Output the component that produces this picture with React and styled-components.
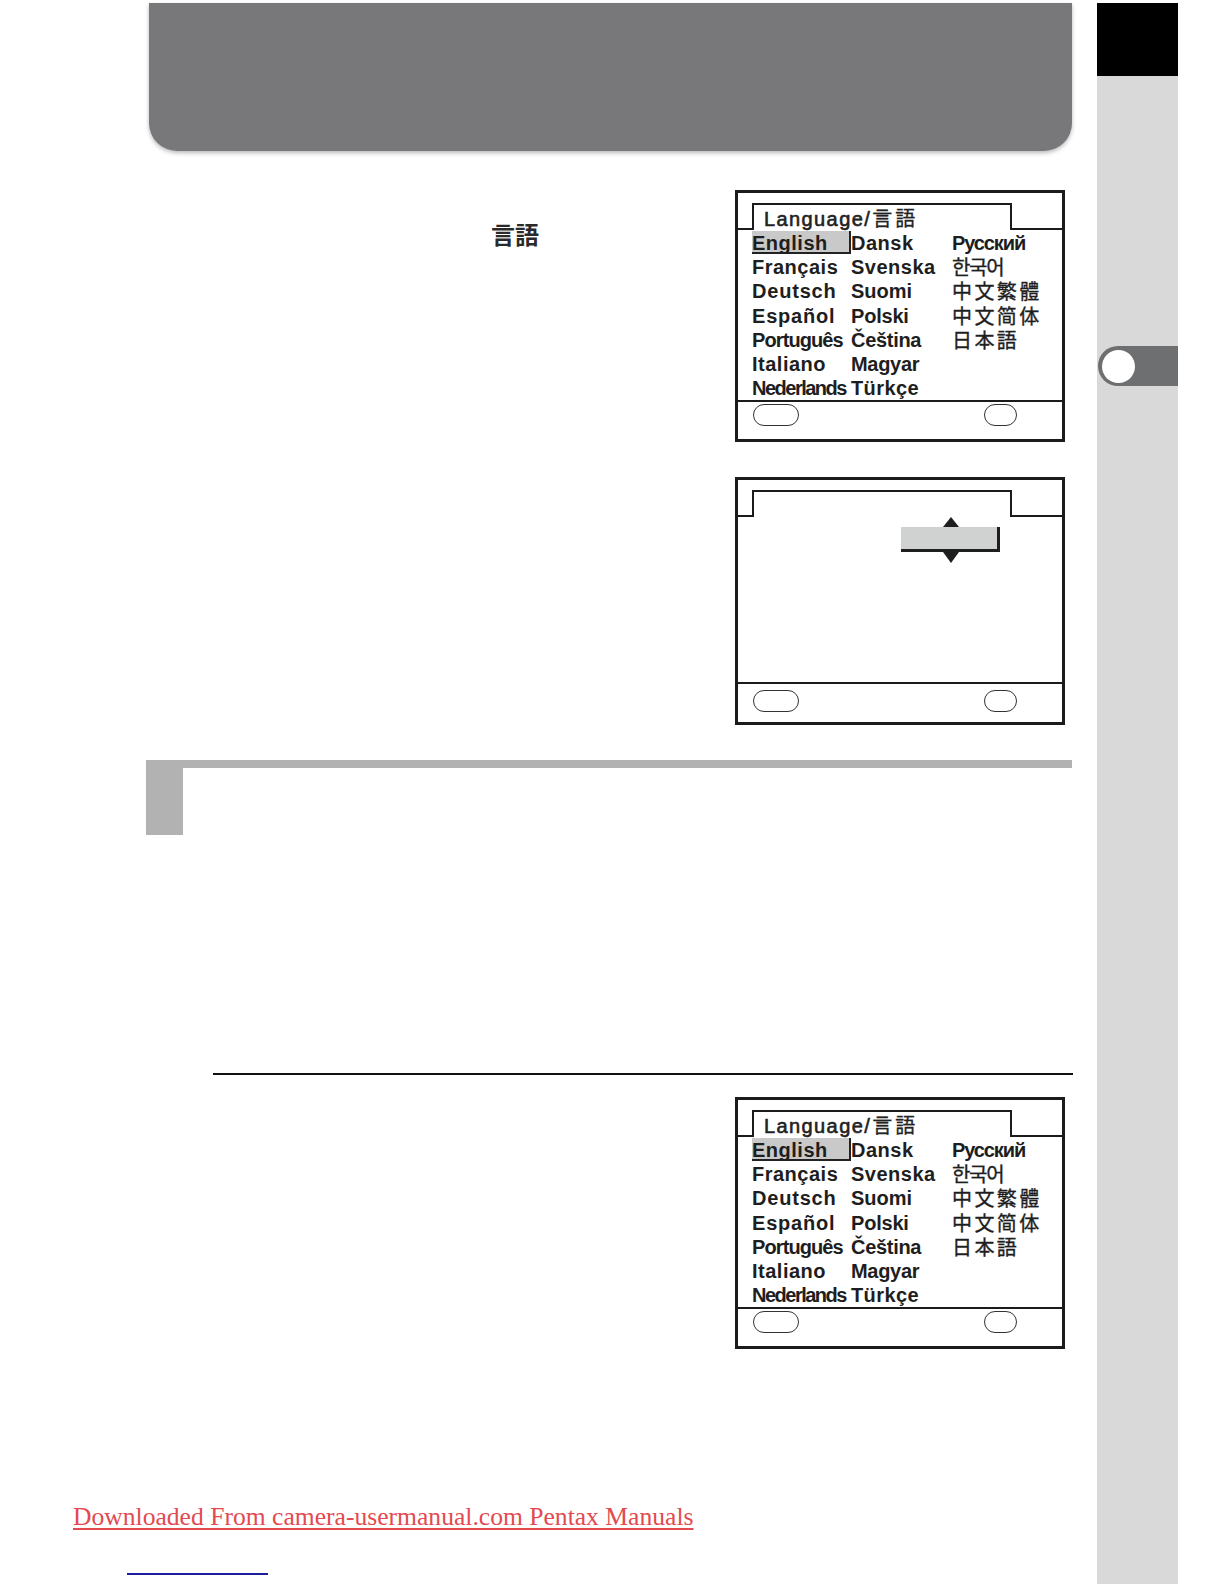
import React from "react";
import styled, { createGlobalStyle } from "styled-components";

const GlobalStyle = createGlobalStyle`
  html, body {
    margin: 0;
    padding: 0;
    background: #fff;
  }
  body {
    font-family: "Liberation Sans", Arial, sans-serif;
    color: #1e1e1e;
  }
`;

const Page = styled.div`
  display: grid;
  grid-template-columns: 1097px 81px 1fr;
  min-height: 1584px;
  box-sizing: border-box;
  padding-top: 3px;
`;

const Main = styled.div`
  display: flex;
  flex-direction: column;
`;

const Banner = styled.div`
  margin-left: 149px;
  width: 923px;
  height: 148px;
  background: #78787a;
  border-radius: 0 0 28px 28px;
  box-shadow: 0 2px 4px rgba(0, 0, 0, 0.28);
`;

const Intro = styled.div`
  display: flex;
  justify-content: space-between;
  margin-top: 39px;
  padding: 0 32px 0 146px;
`;

const TextCol = styled.div`
  padding: 32px 0 0 345px;
`;

const Term = styled.span`
  font-family: "Noto Sans CJK JP", "Noto Sans CJK SC", sans-serif;
  font-weight: 700;
  font-size: 24px;
  line-height: 24px;
  color: #2a2a2a;
`;

const ScreenCol = styled.div`
  display: flex;
  flex-direction: column;
  gap: 35px;
`;

const Screen = styled.div`
  width: 330px;
  height: ${(p) => p.$h}px;
  box-sizing: border-box;
  border: 3px solid #1b1b1b;
  display: flex;
  flex-direction: column;
  background: #fff;
`;

const TabRow = styled.div`
  height: 37px;
  flex: none;
  box-sizing: border-box;
  padding: 10px 0 0 14px;
  border-bottom: 2px solid #1b1b1b;
  display: flex;
  align-items: flex-end;
`;

const Tab = styled.div`
  width: 260px;
  height: 27px;
  box-sizing: border-box;
  border: 2px solid #1b1b1b;
  border-bottom: none;
  margin-bottom: -2px;
  background: #fff;
  padding-left: 10px;
  display: flex;
  align-items: center;
`;

const TabTitle = styled.span`
  font-size: 20px;
  letter-spacing: 1.4px;
  color: #222;
  -webkit-text-stroke: 0.6px #222;
  white-space: nowrap;
`;

const TitleCjk = styled.span`
  font-family: "Noto Sans CJK JP", sans-serif;
  font-size: 20px;
  letter-spacing: 3px;
  margin-left: 1px;
  -webkit-text-stroke: 0.3px #222;
`;

const Body = styled.div`
  height: ${(p) => p.$h}px;
  flex: none;
`;

const List = styled.div`
  display: grid;
  grid-template-columns: 99px 101px 1fr;
  grid-auto-rows: 24.2px;
  padding: 1px 0 0 14px;
`;

const Cell = styled.div`
  font-family: ${(p) =>
    p.$cjk
      ? '"Noto Sans CJK JP", "Noto Sans CJK KR", sans-serif'
      : '"Liberation Sans", Arial, sans-serif'};
  font-weight: ${(p) => (p.$cjk ? 400 : 700)};
  font-size: ${(p) => p.$size || 20}px;
  letter-spacing: ${(p) => p.$ls ?? 0.5}px;
  -webkit-text-stroke: ${(p) => (p.$cjk ? "0.35px #1e1e1e" : "0")};
  line-height: 22px;
  white-space: nowrap;
  color: #1e1e1e;
  box-sizing: border-box;
  height: ${(p) => (p.$selected ? "23px" : "auto")};
  padding-top: 1px;
  background: ${(p) => (p.$selected ? "#c9c9c9" : "transparent")};
  border-right: ${(p) => (p.$selected ? "2px solid #222" : "none")};
  border-bottom: ${(p) => (p.$selected ? "2px solid #222" : "none")};
`;

const ScreenFoot = styled.div`
  flex: 1;
  border-top: 2px solid #1b1b1b;
  display: flex;
  justify-content: space-between;
  align-items: flex-start;
  padding: ${(p) => p.$pt}px 45px 0 15px;
`;

const Pill = styled.div`
  width: ${(p) => p.$w}px;
  height: 22px;
  box-sizing: border-box;
  border: 1.5px solid #333;
  border-radius: 11px;
`;

const Spinner = styled.div`
  display: flex;
  flex-direction: column;
  align-items: center;
  width: 99px;
  margin-left: 163px;
`;

const Arrow = styled.div`
  width: 0;
  height: 0;
  border-left: 8.5px solid transparent;
  border-right: 8.5px solid transparent;
  ${(p) =>
    p.$down
      ? "border-top: 11px solid #1e1e1e;"
      : "border-bottom: 10px solid #1e1e1e;"}
`;

const SpinBox = styled.div`
  width: 99px;
  height: 25px;
  box-sizing: border-box;
  background: #d0d2d2;
  border-right: 3px solid #1e1e1e;
  border-bottom: 3px solid #1e1e1e;
`;

const SectionHead = styled.div`
  margin: 35px 0 0 146px;
  width: 926px;
  height: 75px;
  box-sizing: border-box;
  border-top: 8px solid #b2b2b2;
`;

const SectionMark = styled.div`
  width: 37px;
  height: 100%;
  background: #b2b2b2;
`;

const Rule = styled.div`
  margin: 238px 0 0 213px;
  width: 860px;
  height: 2px;
  background: #111;
`;

const LowerRow = styled.div`
  display: flex;
  justify-content: flex-end;
  margin-top: 22px;
  padding-right: 32px;
`;

const Footer = styled.div`
  margin-top: 153px;
  padding-left: 73px;
  font-family: "Liberation Serif", "Times New Roman", serif;
  font-size: 25.6px;
  line-height: 30px;
  color: #e24a4f;
  white-space: nowrap;
  text-decoration: underline;
  text-decoration-thickness: 2px;
  text-underline-offset: 3px;
`;

const BlueRule = styled.div`
  margin: 41px 0 0 127px;
  width: 141px;
  height: 2px;
  background: #1c1c9c;
`;

const Sidebar = styled.div`
  background: #d9d9d9;
  display: flex;
  flex-direction: column;
`;

const SideBlock = styled.div`
  height: 73px;
  background: #000;
`;

const SideTab = styled.div`
  margin: 270px 0 0 1px;
  height: 40px;
  background: #6d6f70;
  border-radius: 20px 0 0 20px;
  display: flex;
  align-items: center;
  padding-left: 4px;
`;

const SideDot = styled.div`
  width: 33px;
  height: 33px;
  border-radius: 50%;
  background: #fff;
`;

const languages = [
  [{ t: "English", selected: true }, { t: "Dansk" }, { t: "Русский", ls: -1.1 }],
  [{ t: "Français" }, { t: "Svenska" }, { t: "한국어", cjk: true, size: 20, ls: -1.3 }],
  [{ t: "Deutsch", ls: 0.8 }, { t: "Suomi", ls: 0 }, { t: "中文繁體", cjk: true, ls: 2.4 }],
  [{ t: "Español", ls: 0.8 }, { t: "Polski", ls: -0.2 }, { t: "中文简体", cjk: true, ls: 2.4 }],
  [{ t: "Português", ls: -0.9 }, { t: "Čeština", ls: -0.3 }, { t: "日本語", cjk: true, ls: 2.4 }],
  [{ t: "Italiano", ls: 0.5 }, { t: "Magyar", ls: -0.3 }, null],
  [{ t: "Nederlands", ls: -1.5 }, { t: "Türkçe", ls: 0.4 }, null],
];

function LanguageScreen() {
  return (
    <Screen $h={252}>
      <TabRow>
        <Tab>
          <TabTitle>
            Language/<TitleCjk>言語</TitleCjk>
          </TabTitle>
        </Tab>
      </TabRow>
      <Body $h={170}>
        <List>
          {languages.flat().map((c, i) =>
            c ? (
              <Cell
                key={i}
                $selected={c.selected}
                $cjk={c.cjk}
                $size={c.size}
                $ls={c.ls}
              >
                {c.t}
              </Cell>
            ) : (
              <div key={i} />
            )
          )}
        </List>
      </Body>
      <ScreenFoot $pt={2}>
        <Pill $w={46} />
        <Pill $w={33} />
      </ScreenFoot>
    </Screen>
  );
}

function SpinnerScreen() {
  return (
    <Screen $h={248}>
      <TabRow>
        <Tab />
      </TabRow>
      <Body $h={165}>
        <Spinner>
          <Arrow />
          <SpinBox />
          <Arrow $down />
        </Spinner>
      </Body>
      <ScreenFoot $pt={6}>
        <Pill $w={46} />
        <Pill $w={33} />
      </ScreenFoot>
    </Screen>
  );
}

export default function App() {
  return (
    <>
      <GlobalStyle />
      <Page>
        <Main>
          <Banner />
          <Intro>
            <TextCol>
              <Term>言語</Term>
            </TextCol>
            <ScreenCol>
              <LanguageScreen />
              <SpinnerScreen />
            </ScreenCol>
          </Intro>
          <SectionHead>
            <SectionMark />
          </SectionHead>
          <Rule />
          <LowerRow>
            <LanguageScreen />
          </LowerRow>
          <Footer>Downloaded From camera-usermanual.com Pentax Manuals</Footer>
          <BlueRule />
        </Main>
        <Sidebar>
          <SideBlock />
          <SideTab>
            <SideDot />
          </SideTab>
        </Sidebar>
        <div />
      </Page>
    </>
  );
}
